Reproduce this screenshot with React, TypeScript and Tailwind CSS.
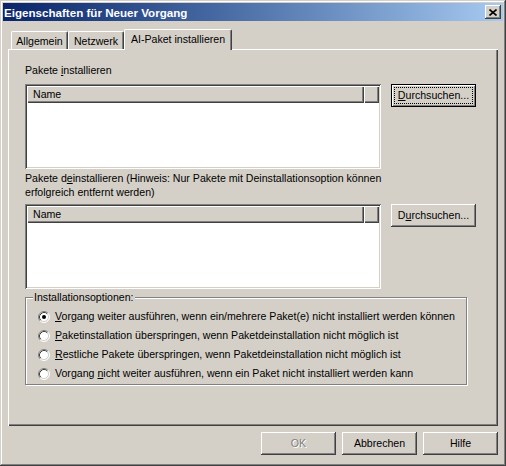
import React from 'react';

const raised =
  'shadow-[inset_-1px_-1px_#404040,inset_1px_1px_#fff,inset_-2px_-2px_#808080,inset_2px_2px_#d4d0c8]';
const sunken =
  'shadow-[inset_1px_1px_#808080,inset_-1px_-1px_#fff,inset_2px_2px_#404040,inset_-2px_-2px_#d4d0c8]';
const headerCell = 'shadow-[inset_1px_1px_#fff,inset_-1px_-1px_#404040,inset_-2px_-2px_#808080]';

function Radio({ checked }: { checked?: boolean }) {
  return (
    <svg width="12" height="12" viewBox="0 0 12 12" className="shrink-0">
      <circle cx="6" cy="6" r="5" fill="#fff" />
      <path d="M2.11 9.89A5.5 5.5 0 0 1 9.89 2.11" stroke="#808080" fill="none" />
      <path d="M9.89 2.11A5.5 5.5 0 0 1 2.11 9.89" stroke="#fff" fill="none" />
      <path d="M2.82 9.18A4.5 4.5 0 0 1 9.18 2.82" stroke="#404040" fill="none" />
      <path d="M9.18 2.82A4.5 4.5 0 0 1 2.82 9.18" stroke="#d4d0c8" fill="none" />
      {checked && <circle cx="6" cy="6" r="2" fill="#000" />}
    </svg>
  );
}

function ListView() {
  return (
    <div className={`w-[356px] h-[85px] bg-white p-[2px] ${sunken}`}>
      <div className="flex h-[17px]">
        <div className={`w-[337px] bg-[#d4d0c8] pl-[6px] flex items-center ${headerCell}`}>Name</div>
        <div className={`flex-1 bg-[#d4d0c8] ${headerCell}`} />
      </div>
    </div>
  );
}

const options = [
  { checked: true, label: <><u>V</u>organg weiter ausführen, wenn ein/mehrere Paket(e) nicht installiert werden können</> },
  { label: <><u>P</u>aketinstallation überspringen, wenn Paketdeinstallation nicht möglich ist</> },
  { label: <><u>R</u>estliche Pakete überspringen, wenn Paketdeinstallation nicht möglich ist</> },
  { label: <>Vorgang <u>n</u>icht weiter ausführen, wenn ein Paket nicht installiert werden kann</> },
];

export default function App() {
  return (
    <div
      className={`w-[506px] h-[466px] p-[3px] bg-[#d4d0c8] text-black text-[10.6px] leading-[13px] font-['Liberation_Sans',Arial,sans-serif] shadow-[inset_-1px_-1px_#404040,inset_1px_1px_#d4d0c8,inset_-2px_-2px_#808080,inset_2px_2px_#fff]`}
    >
      {/* Title bar */}
      <div className="flex items-center justify-between h-[18px] pl-[1px] pr-[2px] bg-linear-to-r from-[#0a246a] to-[#a6caf0]">
        <span className="text-white font-bold text-[11.6px]">Eigenschaften für Neuer Vorgang</span>
        <div className={`w-[16px] h-[14px] bg-[#d4d0c8] flex items-center justify-center ${raised}`}>
          <svg width="8" height="7" viewBox="0 0 8 7">
            <path d="M0.5 0.5L7.5 6.5M7.5 0.5L0.5 6.5" stroke="#000" strokeWidth="1.6" />
          </svg>
        </div>
      </div>

      <div className="px-[5px] pt-[8px]">
        {/* Tabs */}
        <div className="flex items-end h-[20px] pl-[3px]">
          <div className="w-[57px] h-[18px] pt-[1px] flex items-center justify-center border-t border-l border-white border-r border-r-[#404040] rounded-t-[2px] shadow-[inset_-1px_0_#808080]">
            Allgemein
          </div>
          <div className="w-[56px] h-[18px] pt-[1px] flex items-center justify-center border-t border-l border-white border-r border-r-[#404040] rounded-t-[2px] shadow-[inset_-1px_0_#808080]">
            Netzwerk
          </div>
          <div className="relative z-10 -mb-px w-[108px] h-[21px] pb-[1px] flex items-center justify-center bg-[#d4d0c8] border-t border-l border-white border-r border-r-[#404040] rounded-t-[2px] shadow-[inset_-1px_0_#808080]">
            AI-Paket installieren
          </div>
        </div>

        {/* Panel */}
        <div className="h-[377px] pl-[17px] pt-[15px] bg-[#d4d0c8] shadow-[inset_1px_1px_#fff,inset_-1px_-1px_#404040,inset_-2px_-2px_#808080]">
          <div>
            Pakete <u>i</u>nstallieren
          </div>
          <div className="mt-[7px] flex items-start gap-[10px]">
            <ListView />
            <button className="w-[85px] h-[23px] bg-[#d4d0c8] border border-black shadow-[inset_1px_1px_#fff,inset_-1px_-1px_#808080] outline-1 outline-dotted outline-black -outline-offset-[4px]">
              <u>D</u>urchsuchen...
            </button>
          </div>

          <div className="mt-[2px] leading-[14px]">
            Pakete d<u>e</u>installieren (Hinweis: Nur Pakete mit Deinstallationsoption können
            <br />
            erfolgreich entfernt werden)
          </div>
          <div className="mt-[5px] flex items-start gap-[10px]">
            <ListView />
            <button className={`w-[85px] h-[23px] bg-[#d4d0c8] ${raised}`}>
              D<u>u</u>rchsuchen...
            </button>
          </div>

          <fieldset className="mt-[2px] w-[442px] border border-[#808080] shadow-[inset_1px_1px_#fff,1px_1px_#fff] pb-[1px]">
            <legend className="ml-[7px] px-[1px] bg-[#d4d0c8] leading-[13px]">Installationsoptionen:</legend>
            <div className="flex flex-col pl-[12px] pt-[3px]">
              {options.map((o, i) => (
                <div key={i} className="h-[19px] flex items-center gap-[5px] whitespace-nowrap">
                  <Radio checked={o.checked} />
                  <span>{o.label}</span>
                </div>
              ))}
            </div>
          </fieldset>
        </div>

        {/* Dialog buttons */}
        <div className="mt-[6px] flex justify-end gap-[6px]">
          <button className={`w-[75px] h-[23px] bg-[#d4d0c8] text-[#808080] [text-shadow:1px_1px_#fff] ${raised}`}>OK</button>
          <button className={`w-[75px] h-[23px] bg-[#d4d0c8] ${raised}`}>Abbrechen</button>
          <button className={`w-[75px] h-[23px] bg-[#d4d0c8] ${raised}`}>Hilfe</button>
        </div>
      </div>
    </div>
  );
}
